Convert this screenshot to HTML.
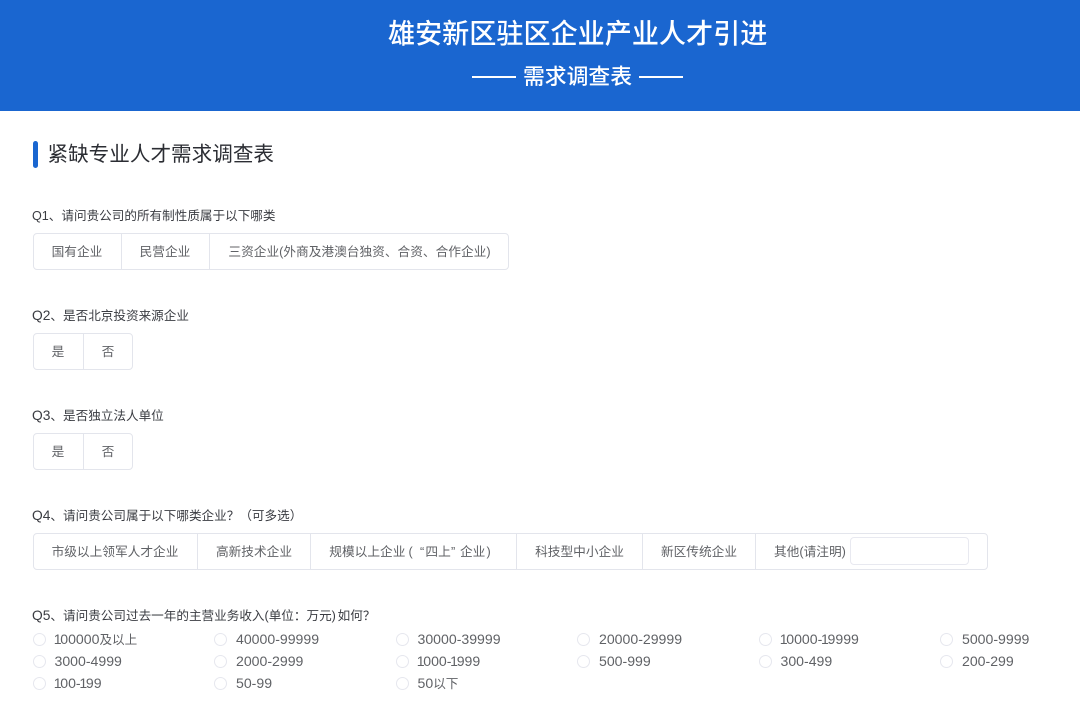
<!DOCTYPE html>
<html lang="zh-CN">
<head>
<meta charset="utf-8">
<title>需求调查表</title>
<style>
*{box-sizing:border-box;margin:0;padding:0}
html,body{width:1080px;height:727px;overflow:hidden;background:#fff}
body{position:relative;font-family:"Liberation Sans","Noto Sans CJK SC",sans-serif}
.a{position:absolute;white-space:nowrap}
.hd{left:0;top:0;width:1080px;height:111px;background:#1a66d0}
.t{color:#fff;font-weight:500}
.ln{height:1.5px;background:#fff;top:76px;width:44px}
.bar{left:32.5px;top:141px;width:5.5px;height:27px;background:#1a66d0;border-radius:3px}
.sec{left:47.5px;top:140px;font-size:20.6px;line-height:30px;color:#2b2d33}
.q{left:32px;font-size:12.6px;line-height:18px;color:#3a3c42}
.q b{font-weight:400;font-size:13.8px}
.box{border:1px solid #e3e5ec;border-radius:4px;height:36.5px;background:#fff;left:32.5px}
.d{width:1px;background:#e3e5ec;height:36.5px}
.c{font-size:12.7px;line-height:18px;color:#606266;text-align:center}
.inp{left:850px;top:537px;width:118.5px;height:27.5px;border:1px solid #e8e9f0;border-radius:4px;background:#fff}
.r{width:13px;height:13px;border:1px solid #e6e7ee;border-radius:50%;background:#fff}
.l{font-size:14.1px;line-height:18px;color:#606266}
.l u{text-decoration:none;font-size:12.6px}
.l i{font-style:normal;letter-spacing:-1.3px;margin-left:-1.3px}
.l i.f{margin-left:-.8px}
</style>
</head>
<body>
<div class="a hd"></div>
<div class="a t" style="left:388px;top:15px;font-size:27.1px;line-height:38px">雄安新区驻区企业产业人才引进</div>
<div class="a ln" style="left:471.5px"></div>
<div class="a ln" style="left:639px"></div>
<div class="a t" style="left:523px;top:61px;font-size:21.8px;line-height:32px">需求调查表</div>

<div class="a bar"></div>
<div class="a sec">紧缺专业人才需求调查表</div>

<div class="a q" style="top:206.5px">Q1、请问贵公司的所有制性质属于以下哪类</div>
<div class="a box" style="top:233px;width:476.5px"></div>
<div class="a d" style="left:121px;top:233px"></div>
<div class="a d" style="left:209px;top:233px"></div>
<div class="a c" style="left:33px;width:88px;top:243px">国有企业</div>
<div class="a c" style="left:121px;width:88px;top:243px">民营企业</div>
<div class="a c" style="left:210px;width:299px;top:243px">三资企业(外商及港澳台独资、合资、合作企业)</div>

<div class="a q" style="top:306.5px"><b>Q2</b>、是否北京投资来源企业</div>
<div class="a box" style="top:333px;width:100.5px"></div>
<div class="a d" style="left:83px;top:333px"></div>
<div class="a c" style="left:33px;width:50px;top:343px">是</div>
<div class="a c" style="left:83px;width:50px;top:343px">否</div>

<div class="a q" style="top:406.5px"><b>Q3</b>、是否独立法人单位</div>
<div class="a box" style="top:433px;width:100.5px"></div>
<div class="a d" style="left:83px;top:433px"></div>
<div class="a c" style="left:33px;width:50px;top:443px">是</div>
<div class="a c" style="left:83px;width:50px;top:443px">否</div>

<div class="a q" style="top:506.5px"><b>Q4</b>、请问贵公司属于以下哪类企业？（可多选）</div>
<div class="a box" style="top:533px;width:955px"></div>
<div class="a d" style="left:197px;top:533px"></div>
<div class="a d" style="left:310px;top:533px"></div>
<div class="a d" style="left:516px;top:533px"></div>
<div class="a d" style="left:642px;top:533px"></div>
<div class="a d" style="left:755px;top:533px"></div>
<div class="a c" style="left:33px;width:164px;top:543px">市级以上领军人才企业</div>
<div class="a c" style="left:198px;width:112px;top:543px">高新技术企业</div>
<div class="a c" style="left:329.3px;top:543px">规模以上企业</div>
<div class="a c" style="left:408.5px;top:543px">(</div>
<div class="a c" style="left:420px;top:543px">“</div>
<div class="a c" style="left:425.4px;top:543px">四上</div>
<div class="a c" style="left:451px;top:543px">”</div>
<div class="a c" style="left:460px;top:543px">企业</div>
<div class="a c" style="left:486.5px;top:543px">)</div>
<div class="a c" style="left:517px;width:125px;top:543px">科技型中小企业</div>
<div class="a c" style="left:643px;width:112px;top:543px">新区传统企业</div>
<div class="a c" style="left:774px;top:543px">其他(请注明)</div>
<div class="a inp"></div>

<div class="a q" style="top:606.5px"><b>Q5</b>、请问贵公司过去一年的主营业务收入(单位：万元<span style="letter-spacing:1.8px">)</span>如何？</div>

<div class="a r" style="left:33px;top:633px"></div><div class="a l" style="left:54.5px;top:630px"><i class="f">1</i>00000<u>及以上</u></div>
<div class="a r" style="left:214px;top:633px"></div><div class="a l" style="left:236px;top:630px">40000-99999</div>
<div class="a r" style="left:396px;top:633px"></div><div class="a l" style="left:417.5px;top:630px">30000-39999</div>
<div class="a r" style="left:577px;top:633px"></div><div class="a l" style="left:599px;top:630px">20000-29999</div>
<div class="a r" style="left:759px;top:633px"></div><div class="a l" style="left:780.5px;top:630px"><i class="f">1</i>0000-<i>1</i>9999</div>
<div class="a r" style="left:940px;top:633px"></div><div class="a l" style="left:962px;top:630px">5000-9999</div>

<div class="a r" style="left:33px;top:655px"></div><div class="a l" style="left:54.5px;top:652px">3000-4999</div>
<div class="a r" style="left:214px;top:655px"></div><div class="a l" style="left:236px;top:652px">2000-2999</div>
<div class="a r" style="left:396px;top:655px"></div><div class="a l" style="left:417.5px;top:652px"><i class="f">1</i>000-<i>1</i>999</div>
<div class="a r" style="left:577px;top:655px"></div><div class="a l" style="left:599px;top:652px">500-999</div>
<div class="a r" style="left:759px;top:655px"></div><div class="a l" style="left:780.5px;top:652px">300-499</div>
<div class="a r" style="left:940px;top:655px"></div><div class="a l" style="left:962px;top:652px">200-299</div>

<div class="a r" style="left:33px;top:677px"></div><div class="a l" style="left:54.5px;top:674px"><i class="f">1</i>00-<i>1</i>99</div>
<div class="a r" style="left:214px;top:677px"></div><div class="a l" style="left:236px;top:674px">50-99</div>
<div class="a r" style="left:396px;top:677px"></div><div class="a l" style="left:417.5px;top:674px">50<u>以下</u></div>
</body>
</html>
